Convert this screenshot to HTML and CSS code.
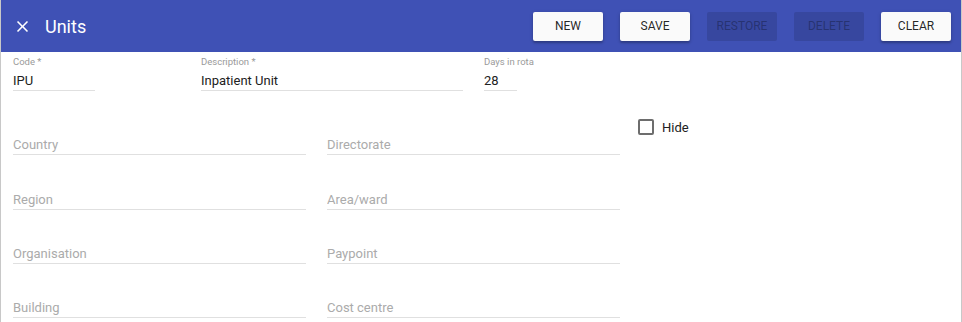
FILE: index.html
```html
<!DOCTYPE html>
<html lang="en">
<head>
    <meta charset="UTF-8">
    <meta name="viewport" content="width=device-width, initial-scale=1.0">
    <title>Units</title>
    <link rel="stylesheet" href="styles.css">
</head>
<body>

<div class="panel">
    <!-- Toolbar -->
    <header class="toolbar">
        <button class="close-btn" type="button" aria-label="Close">
            <svg viewBox="0 0 24 24" width="19" height="19"><path fill="currentColor" d="M19 6.41L17.59 5 12 10.59 6.41 5 5 6.41 10.59 12 5 17.59 6.41 19 12 13.41 17.59 19 19 17.59 13.41 12z"/></svg>
        </button>
        <h1>Units</h1>
        <div class="actions">
            <button type="button" class="action">New</button>
            <button type="button" class="action">Save</button>
            <button type="button" class="action" disabled>Restore</button>
            <button type="button" class="action" disabled>Delete</button>
            <button type="button" class="action">Clear</button>
        </div>
    </header>

    <form class="unit-form">
        <!-- Top fields -->
        <div class="top-row">
            <div class="field code">
                <label for="code">Code *</label>
                <input type="text" id="code" value="IPU">
            </div>
            <div class="field description">
                <label for="description">Description *</label>
                <input type="text" id="description" value="Inpatient Unit">
            </div>
            <div class="field days">
                <label for="days">Days in rota</label>
                <input type="text" id="days" value="28">
            </div>
        </div>

        <!-- Lookup fields -->
        <div class="grid">
            <div class="field"><input type="text" placeholder="Country"></div>
            <div class="field"><input type="text" placeholder="Directorate"></div>
            <label class="check"><span class="box"></span>Hide</label>

            <div class="field"><input type="text" placeholder="Region"></div>
            <div class="field"><input type="text" placeholder="Area/ward"></div>
            <div></div>

            <div class="field"><input type="text" placeholder="Organisation"></div>
            <div class="field"><input type="text" placeholder="Paypoint"></div>
            <div></div>

            <div class="field"><input type="text" placeholder="Building"></div>
            <div class="field"><input type="text" placeholder="Cost centre"></div>
            <div></div>
        </div>
    </form>
</div>

</body>
</html>
```

FILE: styles.css
```css
body {
    margin: 0;
    font-family: Roboto, "Liberation Sans", Arial, sans-serif;
    background: #fff;
}

.panel {
    height: 322px;
    border-left: 1px solid #c8c8c8;
    border-right: 1px solid #c8c8c8;
    overflow: hidden;
}

.toolbar {
    display: flex;
    align-items: center;
    height: 52px;
    background-color: #3f51b5;
    color: #fff;
    padding: 0 10px 0 12px;
}

.close-btn {
    display: flex;
    background: none;
    border: none;
    padding: 0;
    color: #fff;
    cursor: pointer;
}

.toolbar h1 {
    margin: 0 0 0 13px;
    font-size: 18px;
    font-weight: 400;
}

.actions {
    display: flex;
    gap: 17px;
    margin-left: auto;
}

.action {
    width: 70px;
    height: 29px;
    border: none;
    border-radius: 2px;
    background-color: #fafafa;
    color: rgba(0, 0, 0, 0.87);
    font-family: inherit;
    font-size: 12px;
    font-weight: 400;
    text-transform: uppercase;
    box-shadow: 0 2px 2px rgba(0, 0, 0, 0.2), 0 1px 4px rgba(0, 0, 0, 0.14);
    cursor: pointer;
}

.action:disabled {
    background-color: rgba(0, 0, 0, 0.12);
    color: rgba(0, 0, 0, 0.3);
    box-shadow: none;
    cursor: default;
}

.unit-form {
    padding: 4px 12px 0;
}

.top-row {
    display: flex;
}

.field label {
    display: block;
    white-space: nowrap;
    font-size: 9.5px;
    line-height: 12px;
    color: #9a9a9a;
}

.field input {
    display: block;
    box-sizing: border-box;
    width: 100%;
    height: 20px;
    margin-top: 3px;
    padding: 0;
    border: none;
    border-bottom: 1px solid #e0e0e0;
    font-family: inherit;
    font-size: 13px;
    color: #212121;
    outline: none;
}

.field input::placeholder {
    color: #ababab;
}

.code {
    width: 82px;
    margin-right: 106px;
}

.description {
    width: 262px;
    margin-right: 21px;
}

.days {
    width: 33px;
}

.grid {
    display: grid;
    grid-template-columns: 293px 293px 1fr;
    grid-auto-rows: 54.3px;
    column-gap: 21px;
    margin-top: 10px;
}

.grid .field {
    align-self: end;
}

.check {
    display: flex;
    align-items: center;
    align-self: start;
    margin: 18px 0 0 -3px;
    font-size: 13px;
    color: #212121;
}

.box {
    width: 12px;
    height: 12px;
    border: 2px solid #6d6d6d;
    border-radius: 2px;
    margin-right: 8px;
}
```
